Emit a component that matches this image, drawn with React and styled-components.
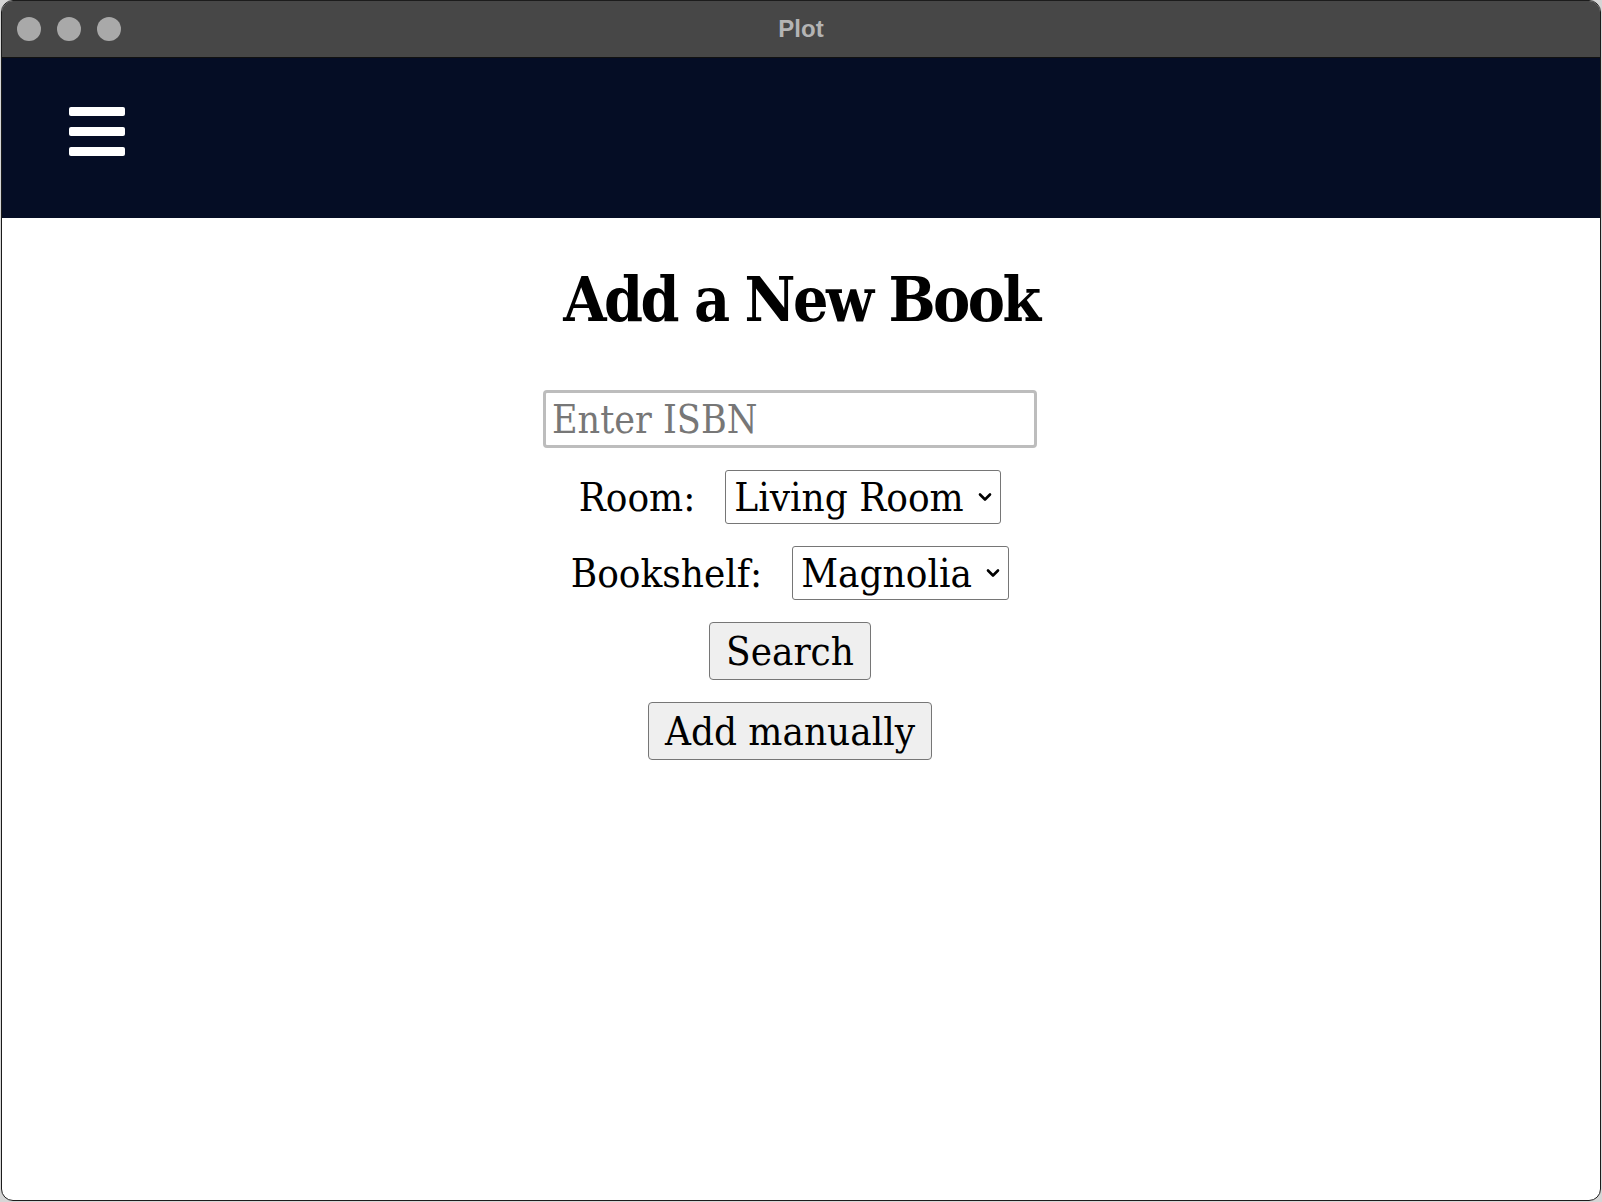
import React from "react";
import styled, { createGlobalStyle } from "styled-components";

const Global = createGlobalStyle`
  html, body {
    margin: 0;
    padding: 0;
    background: #d6d6d6;
  }
  * {
    box-sizing: border-box;
  }
`;

const Window = styled.div`
  width: 1600px;
  height: 1201px;
  margin: 0 0 0 1px;
  border: 1px solid #1c1c1c;
  border-radius: 12px;
  overflow: hidden;
  background: white;
  display: flex;
  flex-direction: column;
  font-family: "DejaVu Serif Condensed", "DejaVu Serif", "Liberation Serif", serif;
  font-stretch: condensed;
`;

const TitleBar = styled.div`
  height: 57px;
  flex-shrink: 0;
  background: #474747;
  border-bottom: 1px solid #111;
  display: flex;
  align-items: center;
  position: relative;
  padding-left: 15px;
  gap: 16px;
`;

const Light = styled.span`
  width: 24px;
  height: 24px;
  border-radius: 50%;
  background: #a9a9a9;
`;

const WindowTitle = styled.div`
  position: absolute;
  left: 0;
  right: 0;
  text-align: center;
  font-family: "Liberation Sans", Arial, sans-serif;
  font-stretch: normal;
  font-weight: bold;
  font-size: 24px;
  color: #b4b4b4;
`;

const NavBar = styled.nav`
  height: 160px;
  flex-shrink: 0;
  background: #050d25;
  display: flex;
  align-items: flex-start;
  padding: 49px 0 0 67px;
`;

const Burger = styled.button`
  width: 56px;
  padding: 0;
  border: none;
  background: transparent;
  display: flex;
  flex-direction: column;
  gap: 11px;
  cursor: pointer;
  span {
    display: block;
    height: 9px;
    border-radius: 2px;
    background: white;
  }
`;

const Main = styled.main`
  display: flex;
  flex-direction: column;
  align-items: center;
`;

const Heading = styled.h1`
  margin: 46px 0 55px;
  font-size: 62px;
  line-height: 1.15;
  font-weight: bold;
  letter-spacing: -2.5px;
  color: #000;
`;

const Form = styled.div`
  display: flex;
  flex-direction: column;
  align-items: center;
  gap: 22px;
  padding-right: 22px;
`;

const IsbnInput = styled.input`
  width: 494px;
  height: 58px;
  border: 3px solid #bdbdbd;
  border-radius: 4px;
  padding: 0 6px;
  font-family: inherit;
  font-stretch: inherit;
  font-size: 39px;
  outline: none;
  &::placeholder {
    color: #777;
  }
`;

const Row = styled.div`
  display: flex;
  align-items: center;
  gap: 30px;
  font-size: 40px;
`;

const SelectWrap = styled.div`
  position: relative;
  display: inline-flex;
  svg {
    position: absolute;
    right: 9px;
    top: 50%;
    margin-top: -6px;
    pointer-events: none;
  }
`;

const Select = styled.select`
  appearance: none;
  height: 54px;
  font-family: inherit;
  font-stretch: inherit;
  font-size: 40px;
  color: #000;
  background: white;
  border: 1px solid #767676;
  border-radius: 3px;
  padding: 0 36px 0 8px;
`;

const Button = styled.button`
  height: 58px;
  padding: 0 16px;
  font-family: inherit;
  font-stretch: inherit;
  font-size: 40px;
  color: #000;
  background: #efefef;
  border: 1px solid #767676;
  border-radius: 4px;
`;

const Chevron = () => (
  <svg width="14" height="12" viewBox="0 0 14 12">
    <path
      d="M2 3.5 L7 8.5 L12 3.5"
      fill="none"
      stroke="#000"
      strokeWidth="2.6"
      strokeLinecap="round"
      strokeLinejoin="round"
    />
  </svg>
);

export default function App() {
  return (
    <>
      <Global />
      <Window>
        <TitleBar>
          <Light />
          <Light />
          <Light />
          <WindowTitle>Plot</WindowTitle>
        </TitleBar>
        <NavBar>
          <Burger aria-label="menu">
            <span />
            <span />
            <span />
          </Burger>
        </NavBar>
        <Main>
          <Heading>Add a New Book</Heading>
          <Form>
            <IsbnInput placeholder="Enter ISBN" autoFocus />
            <Row>
              <label>Room:</label>
              <SelectWrap>
                <Select defaultValue="living">
                  <option value="living">Living Room</option>
                </Select>
                <Chevron />
              </SelectWrap>
            </Row>
            <Row>
              <label>Bookshelf:</label>
              <SelectWrap>
                <Select defaultValue="magnolia">
                  <option value="magnolia">Magnolia</option>
                </Select>
                <Chevron />
              </SelectWrap>
            </Row>
            <Button>Search</Button>
            <Button>Add manually</Button>
          </Form>
        </Main>
      </Window>
    </>
  );
}
